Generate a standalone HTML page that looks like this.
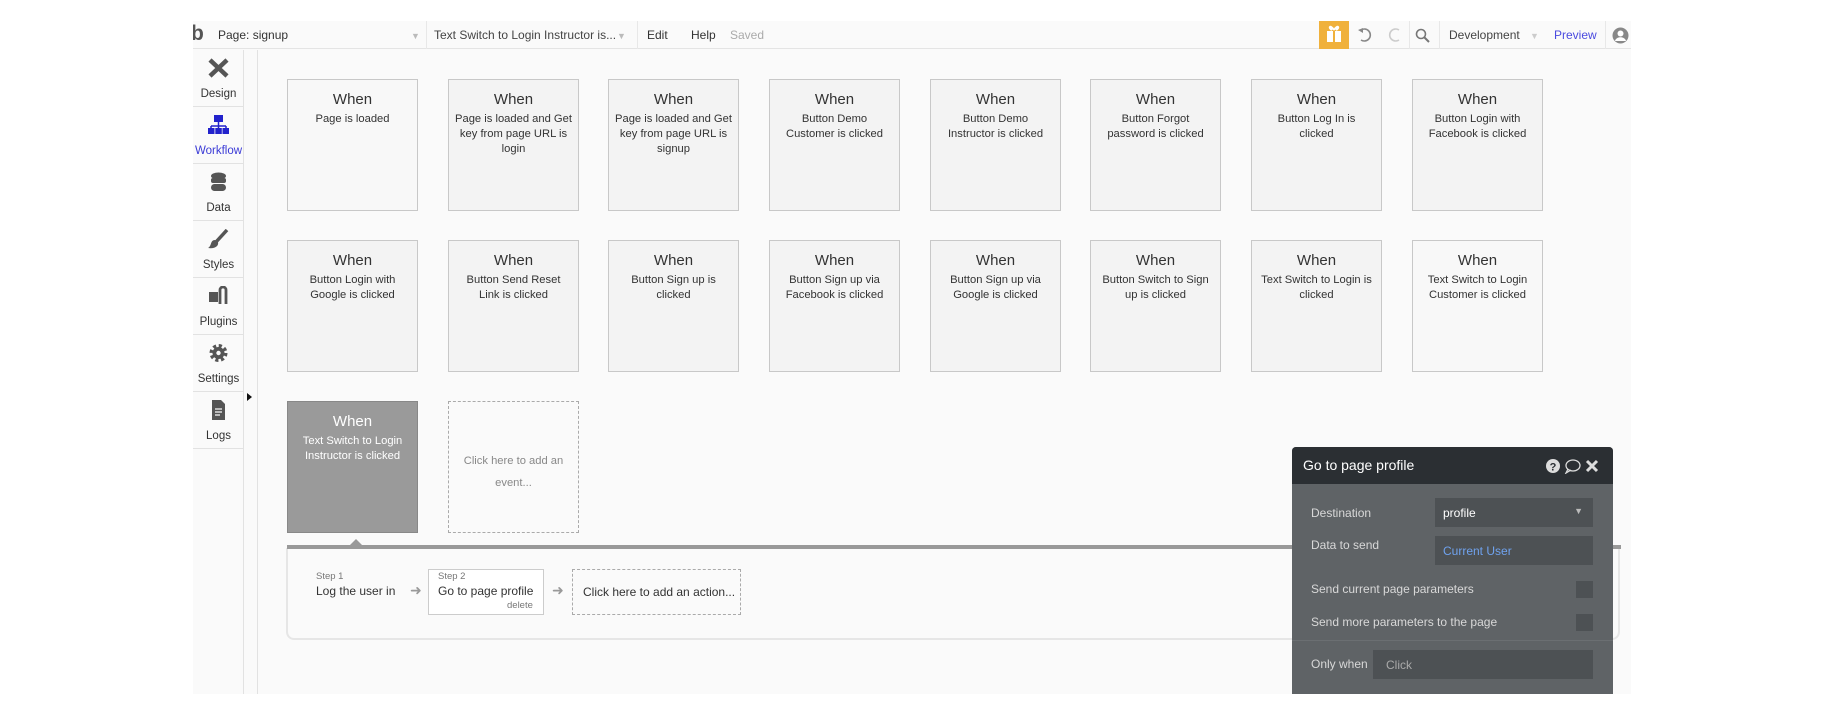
<!DOCTYPE html>
<html><head><meta charset="utf-8"><style>
*{box-sizing:border-box;margin:0;padding:0}
body{width:1830px;height:704px;background:#fff;font-family:"Liberation Sans",sans-serif;position:relative;overflow:hidden;color:#333}
.abs{position:absolute}
#app{left:193px;top:21px;width:1438px;height:673px;background:#fafafa;overflow:hidden}
#top{left:0;top:0;width:1438px;height:28px;background:#fafafa;border-bottom:1px solid #e4e4e4;font-size:12px}
#top span{position:absolute;top:7px;white-space:nowrap}
.sep{position:absolute;top:0;width:1px;height:28px;background:#e8e8e8}
#side{left:0;top:29px;width:51px;height:644px;background:#fafafa;border-right:1px solid #e2e2e2}
.si{position:absolute;left:0;width:51px;height:57px;border-bottom:1px solid #e2e2e2;text-align:center;font-size:11.5px;color:#333}
.si .lab{position:absolute;left:0;right:0;bottom:6px}
.si svg{position:absolute;left:15px;top:8px}
#gut{left:51px;top:29px;width:14px;height:644px;border-right:1px solid #e2e2e2}
.card{position:absolute;width:131px;height:132px;border:1px solid #c8c8c8;background:#f3f3f3;text-align:center;font-size:11.2px;line-height:15px;color:#333;padding:0;white-space:nowrap}
.card b{display:block;font-weight:normal;font-size:15px;margin:12px 0 5px}
.card.w{background:#f8f8f8}
.card.sel{background:#9a9a9a;color:#fff;border-color:#888}
.card.add{background:transparent;border:1px dashed #aaa;color:#888;padding-top:48px;line-height:22px}
#pop{left:1292px;top:447px;width:321px;height:247px;background:#5f6366;border-radius:4px 4px 0 0}
#pop .hd{height:37px;background:#2b2f33;border-radius:4px 4px 0 0;color:#fff;font-size:14px;padding:10px 11px}
.pl{position:absolute;left:19px;font-size:12px;color:#d8d8d8}
.pb{position:absolute;background:#4d5154}
</style></head><body>
<div id="app" class="abs">
 <div id="top" class="abs">
  <span style="left:-2px;top:1px;font-size:21px;font-weight:bold;color:#555">b</span>
  <span style="left:25px">Page: signup</span>
  <span style="left:218px;color:#bbb;font-size:9px;top:10px">▼</span>
  <div class="sep" style="left:233px"></div>
  <span style="left:241px;color:#444">Text Switch to Login Instructor is...</span>
  <span style="left:424px;color:#bbb;font-size:9px;top:10px">▼</span>
  <div class="sep" style="left:444px"></div>
  <span style="left:454px">Edit</span>
  <span style="left:498px">Help</span>
  <span style="left:537px;color:#aaa">Saved</span>
  <div class="abs" style="left:1126px;top:0;width:30px;height:28px;background:#f0b13c"></div>
  <svg class="abs" style="left:1132px;top:3px" width="18" height="20" viewBox="0 0 18 20"><rect x="2" y="7" width="14" height="11" fill="#fff"/><rect x="8" y="7" width="2" height="11" fill="#f0b13c"/><path d="M9 6 C5 0 3 4 7 6 M9 6 C13 0 15 4 11 6" stroke="#fff" stroke-width="2" fill="none"/></svg>
  <svg class="abs" style="left:1164px;top:6px" width="16" height="16" viewBox="0 0 16 16"><path d="M4 3 A6 6 0 1 1 4 13" stroke="#888" stroke-width="1.6" fill="none"/><path d="M1 3 L6 1 L6 6Z" fill="#888"/></svg>
  <svg class="abs" style="left:1194px;top:6px" width="16" height="16" viewBox="0 0 16 16"><path d="M12 3 A6 6 0 1 0 12 13" stroke="#ccc" stroke-width="1.6" fill="none"/></svg>
  <div class="sep" style="left:1216px"></div>
  <svg class="abs" style="left:1222px;top:7px" width="15" height="15" viewBox="0 0 15 15"><circle cx="6" cy="6" r="4.5" stroke="#777" stroke-width="1.6" fill="none"/><path d="M9.5 9.5 L14 14" stroke="#777" stroke-width="2"/></svg>
  <div class="sep" style="left:1246px"></div>
  <span style="left:1256px;color:#444">Development</span>
  <span style="left:1337px;color:#ccc;font-size:9px;top:10px">▼</span>
  <span style="left:1361px;color:#4a4adf">Preview</span>
  <div class="sep" style="left:1412px"></div>
  <svg class="abs" style="left:1419px;top:6px" width="17" height="17" viewBox="0 0 17 17"><circle cx="8.5" cy="8.5" r="8" fill="#888"/><circle cx="8.5" cy="6.5" r="3" fill="#fff"/><path d="M3 14 C4 9 13 9 14 14Z" fill="#fff"/></svg>
 </div>
 <div id="side" class="abs">
  <div class="si" style="top:0"><svg width="21" height="20" viewBox="0 0 21 20"><path d="M2 2 L19 18 M19 2 L2 18" stroke="#555" stroke-width="4.5"/></svg><div class="lab">Design</div></div>
  <div class="si" style="top:57px;color:#3a3ad6"><svg width="21" height="20" viewBox="0 0 21 20"><rect x="6" y="0" width="9" height="7" fill="#2222cc"/><path d="M10.5 7v4M3 11h15M3 11v3M10.5 11v3M18 11v3" stroke="#2222cc" stroke-width="1.5"/><rect x="0" y="13" width="6.5" height="6" fill="#2222cc"/><rect x="7.3" y="13" width="6.5" height="6" fill="#2222cc"/><rect x="14.5" y="13" width="6.5" height="6" fill="#2222cc"/></svg><div class="lab">Workflow</div></div>
  <div class="si" style="top:114px"><svg width="21" height="20" viewBox="0 0 21 20"><ellipse cx="10.5" cy="4" rx="7.5" ry="3.5" fill="#555"/><rect x="3" y="6" width="15" height="5" rx="2" fill="#555"/><rect x="3" y="12" width="15" height="7" rx="3.5" fill="#555"/></svg><div class="lab">Data</div></div>
  <div class="si" style="top:171px"><svg width="21" height="20" viewBox="0 0 21 20"><path d="M19 1 L8 13" stroke="#555" stroke-width="3.5"/><path d="M7 11 C2 11 4 17 0 19 C7 20 11 17 10 13Z" fill="#555"/></svg><div class="lab">Styles</div></div>
  <div class="si" style="top:228px"><svg width="21" height="20" viewBox="0 0 21 20"><rect x="1" y="6" width="9" height="10" fill="#555"/><path d="M12 18 V4 a3 3 0 0 1 6 0 V18" stroke="#555" stroke-width="2.8" fill="none"/></svg><div class="lab">Plugins</div></div>
  <div class="si" style="top:285px"><svg width="21" height="20" viewBox="0 0 21 20"><circle cx="10.5" cy="10" r="7" fill="none" stroke="#555" stroke-width="4" stroke-dasharray="3 2.5"/><circle cx="10.5" cy="10" r="6" fill="#555"/><circle cx="10.5" cy="10" r="2.2" fill="#fafafa"/></svg><div class="lab">Settings</div></div>
  <div class="si" style="top:342px"><svg width="21" height="20" viewBox="0 0 21 20"><path d="M4 0 H13 L17 4 V20 H4Z" fill="#555"/><path d="M7 9h7M7 12h7M7 15h5" stroke="#fafafa" stroke-width="1.2"/></svg><div class="lab">Logs</div></div>
 </div>
 <div id="gut" class="abs"></div>
 <div class="abs" style="left:54px;top:372px;width:0;height:0;border-left:5px solid #111;border-top:4px solid transparent;border-bottom:4px solid transparent"></div>
</div>

<div class="card w" style="left:287px;top:79px"><b>When</b>Page is loaded</div>
<div class="card" style="left:448px;top:79px"><b>When</b>Page is loaded and Get<br>key from page URL is<br>login</div>
<div class="card" style="left:608px;top:79px"><b>When</b>Page is loaded and Get<br>key from page URL is<br>signup</div>
<div class="card" style="left:769px;top:79px"><b>When</b>Button Demo<br>Customer is clicked</div>
<div class="card" style="left:930px;top:79px"><b>When</b>Button Demo<br>Instructor is clicked</div>
<div class="card" style="left:1090px;top:79px"><b>When</b>Button Forgot<br>password is clicked</div>
<div class="card" style="left:1251px;top:79px"><b>When</b>Button Log In is<br>clicked</div>
<div class="card" style="left:1412px;top:79px"><b>When</b>Button Login with<br>Facebook is clicked</div>

<div class="card" style="left:287px;top:240px"><b>When</b>Button Login with<br>Google is clicked</div>
<div class="card" style="left:448px;top:240px"><b>When</b>Button Send Reset<br>Link is clicked</div>
<div class="card" style="left:608px;top:240px"><b>When</b>Button Sign up is<br>clicked</div>
<div class="card" style="left:769px;top:240px"><b>When</b>Button Sign up via<br>Facebook is clicked</div>
<div class="card" style="left:930px;top:240px"><b>When</b>Button Sign up via<br>Google is clicked</div>
<div class="card" style="left:1090px;top:240px"><b>When</b>Button Switch to Sign<br>up is clicked</div>
<div class="card" style="left:1251px;top:240px"><b>When</b>Text Switch to Login is<br>clicked</div>
<div class="card w" style="left:1412px;top:240px"><b>When</b>Text Switch to Login<br>Customer is clicked</div>

<div class="card sel" style="left:287px;top:401px"><b>When</b>Text Switch to Login<br>Instructor is clicked</div>
<div class="card add" style="left:448px;top:401px">Click here to add an<br>event...</div>

<div class="abs" style="left:286px;top:548px;width:1334px;height:92px;border:2px solid #e6e6e6;border-top:none;border-radius:0 0 8px 8px;background:#fafafa"></div>
<div class="abs" style="left:287px;top:545px;width:1334px;height:4px;background:#999"></div>
<div class="abs" style="left:349px;top:539px;width:0;height:0;border-left:7px solid transparent;border-right:7px solid transparent;border-bottom:7px solid #999"></div>

<div class="abs" style="left:316px;top:571px;font-size:9.5px;color:#777">Step 1</div>
<div class="abs" style="left:316px;top:584px;font-size:12px;color:#333">Log the user in</div>
<div class="abs" style="left:410px;top:582px;font-size:14px;color:#999">➜</div>
<div class="abs" style="left:428px;top:569px;width:116px;height:46px;border:1px solid #ccc;background:#fff"></div>
<div class="abs" style="left:438px;top:571px;font-size:9.5px;color:#777">Step 2</div>
<div class="abs" style="left:438px;top:584px;font-size:12px;color:#333">Go to page profile</div>
<div class="abs" style="left:507px;top:600px;font-size:9.5px;color:#777">delete</div>
<div class="abs" style="left:552px;top:582px;font-size:14px;color:#999">➜</div>
<div class="abs" style="left:572px;top:569px;width:169px;height:46px;border:1px dashed #aaa;font-size:12px;padding:15px 0 0 10px;color:#333">Click here to add an action...</div>

<div id="pop" class="abs">
 <div class="hd">Go to page profile</div>
 <svg class="abs" style="left:253px;top:11px" width="60" height="16" viewBox="0 0 60 16"><circle cx="8" cy="8" r="7" fill="#ddd"/><text x="8" y="12.5" font-size="11" font-weight="bold" text-anchor="middle" fill="#2b2f33" font-family="Liberation Sans">?</text><ellipse cx="28" cy="7.5" rx="7" ry="5.5" fill="none" stroke="#ddd" stroke-width="1.3"/><path d="M23 11 L21 15 L26 12" fill="none" stroke="#ddd" stroke-width="1.3"/><path d="M42 3 L52 13 M52 3 L42 13" stroke="#ddd" stroke-width="3"/></svg>
 <div class="pl" style="top:59px">Destination</div>
 <div class="pb" style="left:143px;top:51px;width:158px;height:29px;color:#fff;font-size:12px;padding:8px 8px">profile<span style="position:absolute;right:10px;top:8px;font-size:9px;color:#bbb">▼</span></div>
 <div class="pl" style="top:91px">Data to send</div>
 <div class="pb" style="left:143px;top:89px;width:158px;height:29px;color:#6fa2ee;font-size:12px;padding:8px 8px">Current User</div>
 <div class="pl" style="top:135px">Send current page parameters</div>
 <div class="pb" style="left:284px;top:134px;width:17px;height:17px"></div>
 <div class="pl" style="top:168px">Send more parameters to the page</div>
 <div class="pb" style="left:284px;top:167px;width:17px;height:17px"></div>
 <div class="abs" style="left:0;top:193px;width:321px;height:1px;background:#6b6f72"></div>
 <div class="pl" style="top:210px">Only when</div>
 <div class="pb" style="left:81px;top:203px;width:220px;height:29px;color:#aaa;font-size:12px;padding:8px 13px">Click</div>
</div>
</body></html>
